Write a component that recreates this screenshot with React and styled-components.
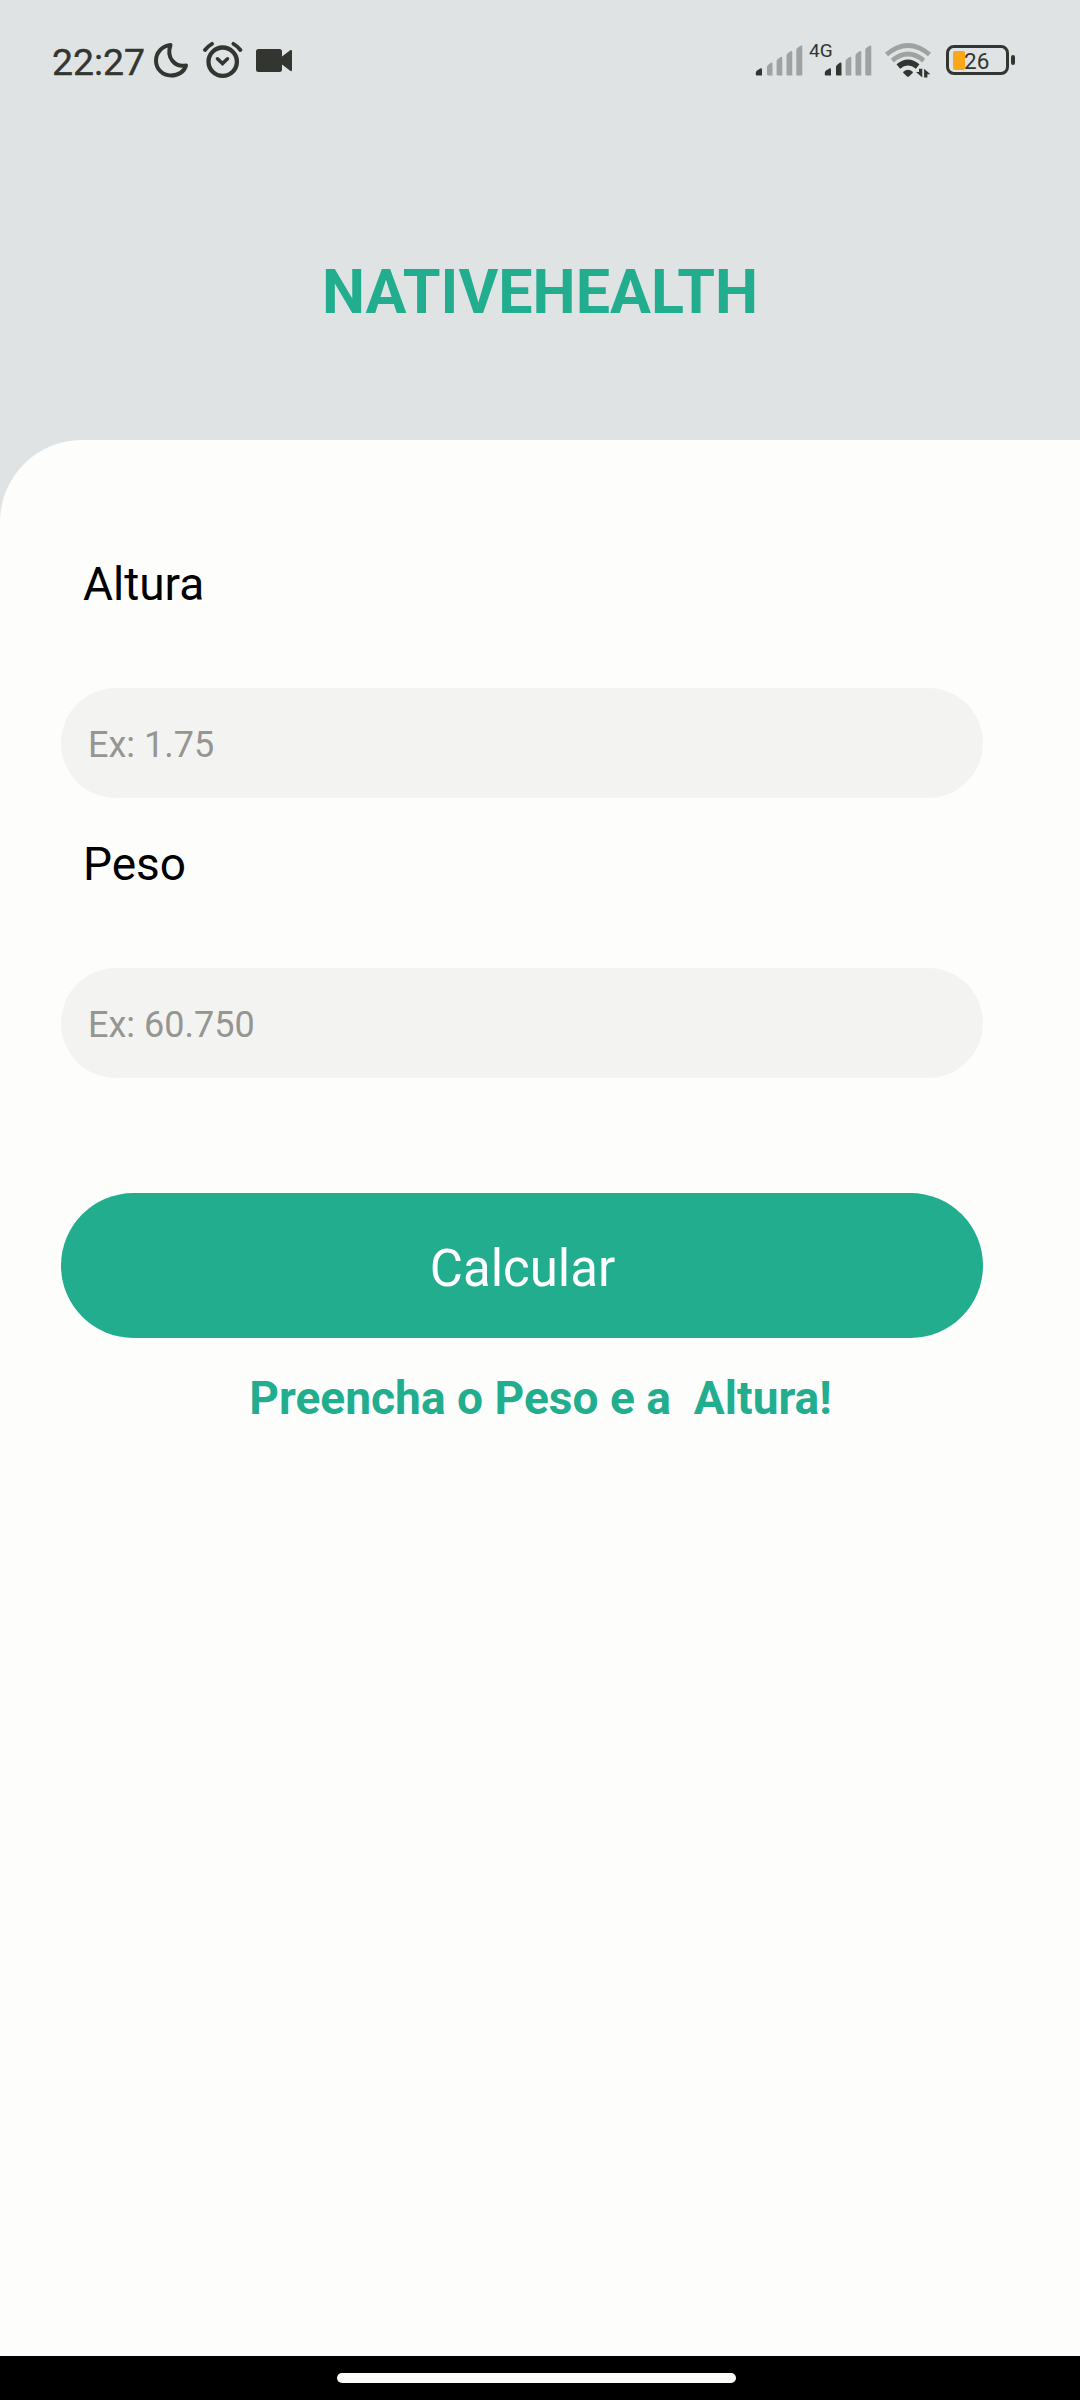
import React from 'react';
import styled, { createGlobalStyle } from 'styled-components';

const teal = '#22ad8f';
const ink = '#333630';
const faded = '#9ea3a1';
const paper = '#fdfdfc';

const GlobalStyle = createGlobalStyle`
  *, *::before, *::after { box-sizing: border-box; }
  body { margin: 0; background: ${paper}; font-family: Roboto, 'Liberation Sans', sans-serif; }
`;

const Screen = styled.div`
  display: flex;
  flex-direction: column;
  width: 1080px;
  height: 2400px;
  background: #e0e3e4;
  overflow: hidden;
`;

const StatusBar = styled.div`
  display: flex;
  justify-content: space-between;
  height: 120px;
  padding: 40px 71px 0 52px;
  color: ${ink};
`;

const StatusGroup = styled.div`
  display: flex;
  align-items: center;
  height: 40px;
`;

const Clock = styled.span`
  width: 101px;
  padding-top: 4px;
  font-size: 37.4px;
  line-height: 40px;
  -webkit-text-stroke: 0.4px ${ink};
`;

const Glyph = styled.svg`
  display: block;
  flex: none;
  width: ${(p) => p.$w}px;
  height: 40px;
  margin-right: ${(p) => p.$gap || 0}px;
`;

const Network = styled.span`
  align-self: flex-start;
  width: 24px;
  margin-left: -9px;
  margin-right: -9px;
  font-size: 19px;
  line-height: 22px;
`;

const Battery = styled.div`
  position: relative;
  display: flex;
  align-items: center;
  width: 63px;
  height: 30px;
  padding-left: 4px;
  border: 3px solid ${ink};
  border-radius: 8px;
  &::after {
    content: '';
    position: absolute;
    right: -9px;
    top: 7px;
    width: 4px;
    height: 10px;
    border-radius: 2px;
    background: ${ink};
  }
`;

const Charge = styled.div`
  width: 12px;
  height: 19px;
  border-radius: 2px;
  background: #fba719;
`;

const Percent = styled.span`
  margin-left: -1px;
  padding-top: 2px;
  font-size: 22.5px;
  line-height: 24px;
`;

const Header = styled.header`
  height: 320px;
  padding-top: 136px;
  text-align: center;
`;

const Title = styled.h1`
  margin: 0;
  color: ${teal};
  font-size: 61px;
  line-height: 72px;
  font-weight: 700;
`;

const Sheet = styled.main`
  flex: 1;
  padding-top: 117px;
  background: ${paper};
  border-top-left-radius: 82px;
`;

const Form = styled.form`
  display: flex;
  flex-direction: column;
  width: 922px;
  margin-left: 61px;
`;

const Label = styled.label`
  padding-left: 22px;
  margin-top: ${(p) => p.$top || 0}px;
  color: #000;
  font-size: 46px;
  line-height: 54px;
`;

const Field = styled.input`
  height: 110px;
  margin: 77px 0 0;
  padding: 3px 27px 0;
  border: 0;
  border-radius: 55px;
  outline: 0;
  background: #f3f3f2;
  font-family: inherit;
  font-size: 36px;
  &::placeholder { color: #959591; opacity: 1; }
`;

const Submit = styled.button`
  height: 145px;
  margin: 115px 0 0;
  padding: 5px 0 0 1px;
  border: 0;
  border-radius: 73px;
  background: ${teal};
  color: #fff;
  font-family: inherit;
  font-size: 51px;
`;

const Message = styled.p`
  margin: 33px 0 0;
  padding-left: 1px;
  color: ${teal};
  font-size: 46.1px;
  line-height: 54px;
  font-weight: 700;
  text-align: center;
  white-space: pre;
`;

const NavBar = styled.nav`
  display: flex;
  justify-content: center;
  height: 44px;
  padding: 17px 7px 0 0;
  background: #000;
`;

const Handle = styled.div`
  width: 399px;
  height: 10px;
  border-radius: 5px;
  background: ${paper};
`;

const bars = [
  [0.8, 6.2, 28.2],
  [12, 5.5, 22.5],
  [21.6, 5.7, 16.8],
  [31.5, 5.8, 11],
  [41.3, 6, 5.5],
];

function Signal({ level, gap }) {
  return (
    <Glyph $w={48} $gap={gap} viewBox="0 0 48 40">
      {bars.map(([x, w, y], i) => (
        <path
          key={x}
          d={`M${x} ${y + 4.5}Q${x} ${y + 3} ${x + 1.3} ${y + 2.3}L${x + w - 1.8} ${y + 0.3}Q${x + w} ${y - 0.5} ${x + w} ${y + 1.5}V35.500H${x + 1}Q${x} 35.500 ${x} 34.500Z`}
          fill={i < level ? ink : faded}
        />
      ))}
    </Glyph>
  );
}

function Status() {
  return (
    <StatusBar>
      <StatusGroup>
        <Clock>22:27</Clock>
        <Glyph $w={36} $gap={13} viewBox="153 40 36 40" fill="none" stroke={ink} strokeWidth="4" strokeLinejoin="round">
          <path d="M170.5 45C161.500 46 156 53 156 60.500C156 69 162.500 75.500 171 75.500C178.500 75.500 184.500 71.500 186 65.500C175 67.500 166 58 170.500 45Z" />
        </Glyph>
        <Glyph $w={41} $gap={13} viewBox="202 40 41 40" fill="none" stroke={ink} strokeWidth="4.300" strokeLinecap="round">
          <circle cx="222.700" cy="61.700" r="14.200" />
          <path d="M217.500 58.800L222.500 63.500L227.500 58.800" strokeWidth="3.600" />
          <path d="M205 50Q208 46 212 43.800M233.400 43.800Q237.400 46 240.400 50" strokeWidth="3.800" />
        </Glyph>
        <Glyph $w={36} viewBox="256 40 36 40" fill={ink}>
          <path d="M258.500 49H279.500Q282 49 282 51.500V56.500L290.500 50Q292 49.500 292 51V70Q292 71.500 290.500 71L282 64.500V69.500Q282 72 279.500 72H258.500Q256 72 256 69.500V51.500Q256 49 258.500 49Z" />
        </Glyph>
      </StatusGroup>
      <StatusGroup>
        <Signal level={1} gap={15} />
        <Network>4G</Network>
        <Signal level={2} gap={12} />
        <Glyph $w={48} $gap={14} viewBox="884 40 48 40" fill="none">
          <path d="M886.500 54.500Q908 36.500 929.500 54.500" stroke={faded} strokeWidth="4.800" />
          <path d="M892.300 60.600Q908 47.500 923.700 60.600" stroke={faded} strokeWidth="4.800" />
          <path d="M898.300 66.500Q908 58.500 917.700 66.500" stroke={ink} strokeWidth="5.600" />
          <path d="M903.300 71.800Q908 67.800 912.700 71.800Q913.200 72.400 912.600 73L909.200 76.300Q908 77.300 906.800 76.300L903.400 73Q902.800 72.400 903.300 71.800Z" fill={ink} />
          <path d="M922.300 68.800V77.600L916 72H919V68.800ZM924.100 77.600V68.800L930.400 74.200H927.400V77.600Z" fill={ink} />
        </Glyph>
        <Battery>
          <Charge />
          <Percent>26</Percent>
        </Battery>
      </StatusGroup>
    </StatusBar>
  );
}

export default function App() {
  return (
    <>
      <GlobalStyle />
      <Screen>
        <Status />
        <Header>
          <Title>NATIVEHEALTH</Title>
        </Header>
        <Sheet>
          <Form onSubmit={(e) => e.preventDefault()}>
            <Label htmlFor="altura">Altura</Label>
            <Field id="altura" placeholder="Ex: 1.75" inputMode="decimal" />
            <Label htmlFor="peso" $top={39}>Peso</Label>
            <Field id="peso" placeholder="Ex: 60.750" inputMode="decimal" />
            <Submit type="submit">Calcular</Submit>
          </Form>
          <Message>{'Preencha o Peso e a  Altura!'}</Message>
        </Sheet>
        <NavBar>
          <Handle />
        </NavBar>
      </Screen>
    </>
  );
}
